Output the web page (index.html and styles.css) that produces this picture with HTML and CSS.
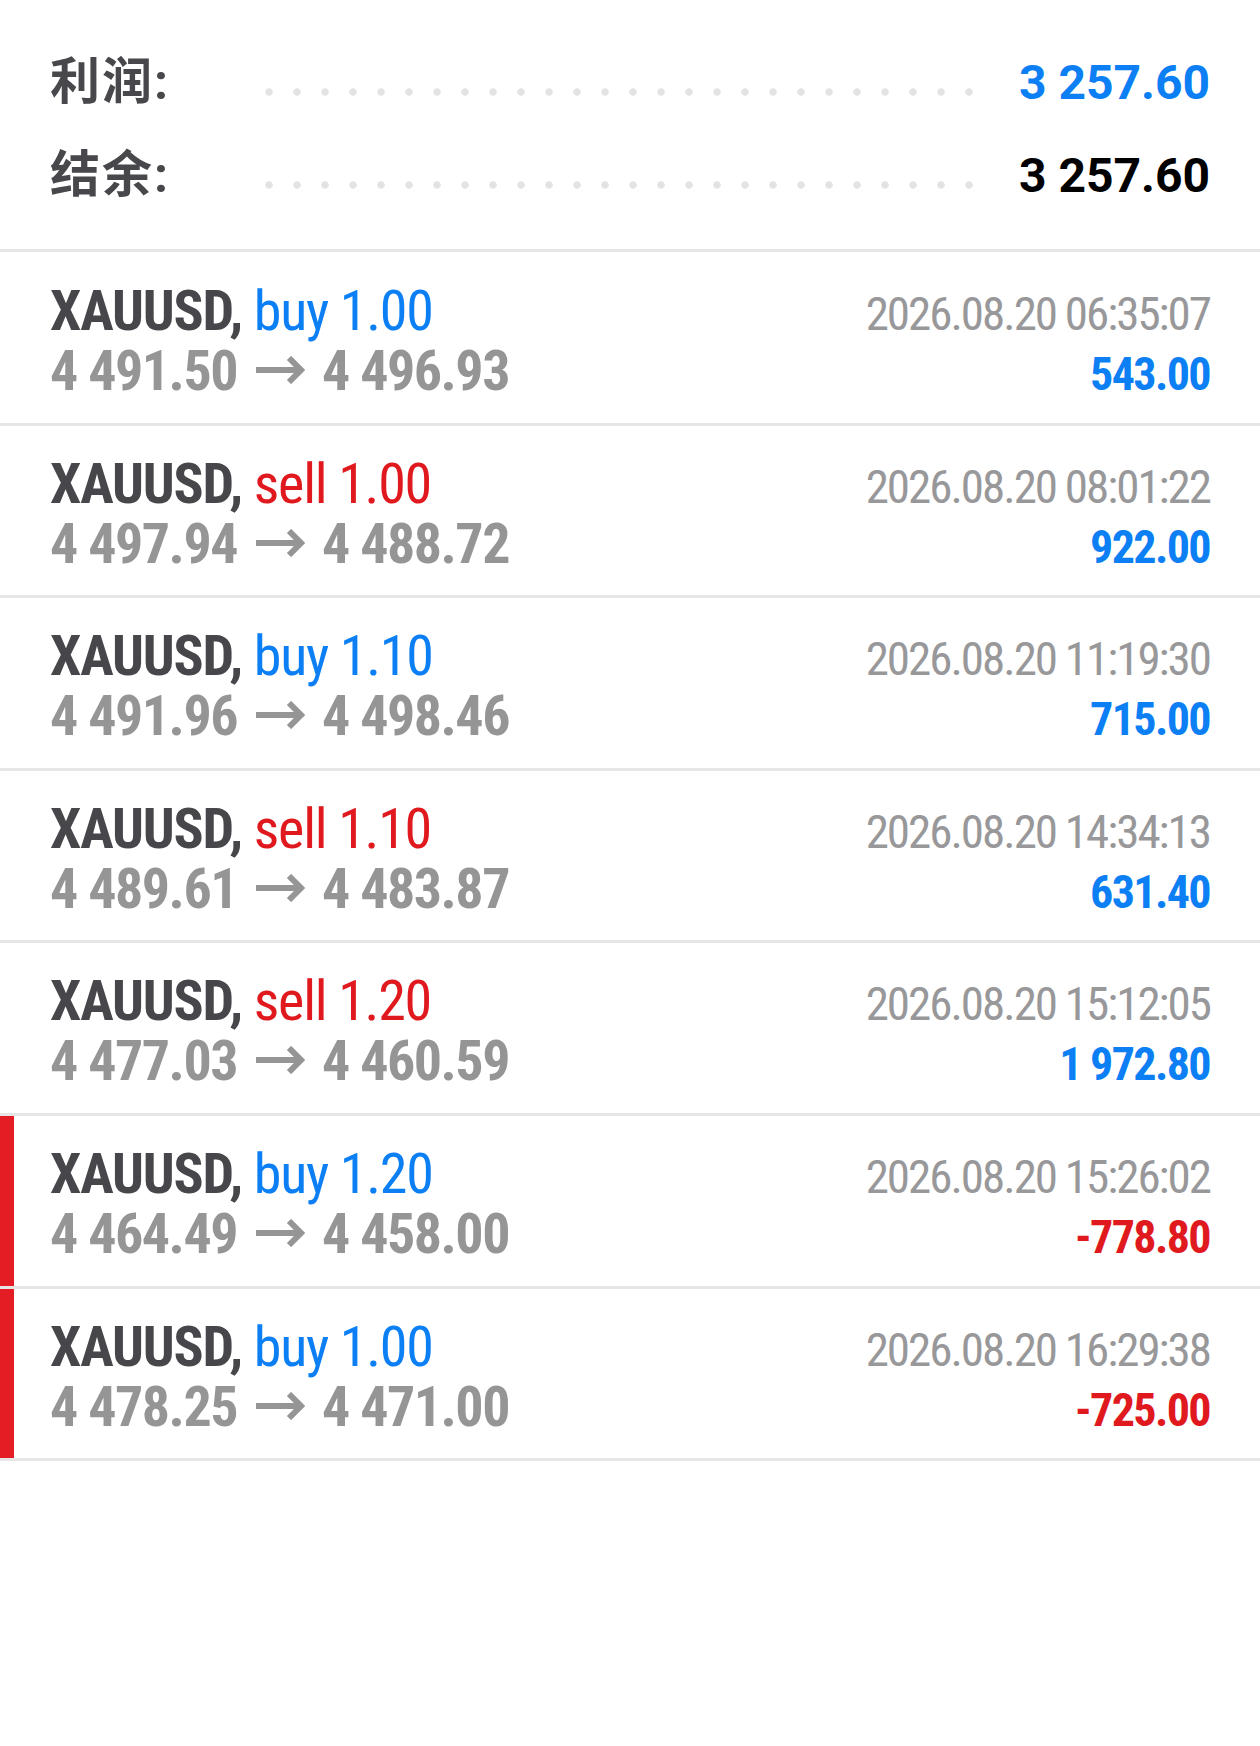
FILE: index.html
```
<!DOCTYPE html>
<html lang="zh">
<head>
    <meta charset="UTF-8">
    <meta name="viewport" content="width=device-width, initial-scale=1.0">
    <title>History</title>
    <link rel="stylesheet" href="styles.css">
</head>
<body>

    <div class="summary">
        <div class="summary-row">
            <span class="summary-label">利润:</span>
            <span class="dots"></span>
            <span class="summary-value profit">3 257.60</span>
        </div>
        <div class="summary-row">
            <span class="summary-label">结余:</span>
            <span class="dots"></span>
            <span class="summary-value">3 257.60</span>
        </div>
    </div>

    <div class="trades">
        <div class="trade">
            <div class="line">
                <span class="symbol">XAUUSD, <span class="side buy">buy 1.00</span></span>
                <span class="time">2026.08.20 06:35:07</span>
            </div>
            <div class="line">
                <span class="prices">4 491.50<svg class="arrow" viewBox="0 0 50 28"><path d="M1 14H46M34 2L46 14L34 26"/></svg>4 496.93</span>
                <span class="amount gain">543.00</span>
            </div>
        </div>

        <div class="trade">
            <div class="line">
                <span class="symbol">XAUUSD, <span class="side sell">sell 1.00</span></span>
                <span class="time">2026.08.20 08:01:22</span>
            </div>
            <div class="line">
                <span class="prices">4 497.94<svg class="arrow" viewBox="0 0 50 28"><path d="M1 14H46M34 2L46 14L34 26"/></svg>4 488.72</span>
                <span class="amount gain">922.00</span>
            </div>
        </div>

        <div class="trade">
            <div class="line">
                <span class="symbol">XAUUSD, <span class="side buy">buy 1.10</span></span>
                <span class="time">2026.08.20 11:19:30</span>
            </div>
            <div class="line">
                <span class="prices">4 491.96<svg class="arrow" viewBox="0 0 50 28"><path d="M1 14H46M34 2L46 14L34 26"/></svg>4 498.46</span>
                <span class="amount gain">715.00</span>
            </div>
        </div>

        <div class="trade">
            <div class="line">
                <span class="symbol">XAUUSD, <span class="side sell">sell 1.10</span></span>
                <span class="time">2026.08.20 14:34:13</span>
            </div>
            <div class="line">
                <span class="prices">4 489.61<svg class="arrow" viewBox="0 0 50 28"><path d="M1 14H46M34 2L46 14L34 26"/></svg>4 483.87</span>
                <span class="amount gain">631.40</span>
            </div>
        </div>

        <div class="trade">
            <div class="line">
                <span class="symbol">XAUUSD, <span class="side sell">sell 1.20</span></span>
                <span class="time">2026.08.20 15:12:05</span>
            </div>
            <div class="line">
                <span class="prices">4 477.03<svg class="arrow" viewBox="0 0 50 28"><path d="M1 14H46M34 2L46 14L34 26"/></svg>4 460.59</span>
                <span class="amount gain">1 972.80</span>
            </div>
        </div>

        <div class="trade loss">
            <div class="line">
                <span class="symbol">XAUUSD, <span class="side buy">buy 1.20</span></span>
                <span class="time">2026.08.20 15:26:02</span>
            </div>
            <div class="line">
                <span class="prices">4 464.49<svg class="arrow" viewBox="0 0 50 28"><path d="M1 14H46M34 2L46 14L34 26"/></svg>4 458.00</span>
                <span class="amount">-778.80</span>
            </div>
        </div>

        <div class="trade loss">
            <div class="line">
                <span class="symbol">XAUUSD, <span class="side buy">buy 1.00</span></span>
                <span class="time">2026.08.20 16:29:38</span>
            </div>
            <div class="line">
                <span class="prices">4 478.25<svg class="arrow" viewBox="0 0 50 28"><path d="M1 14H46M34 2L46 14L34 26"/></svg>4 471.00</span>
                <span class="amount">-725.00</span>
            </div>
        </div>
    </div>

</body>
</html>
```

FILE: styles.css
```
body {
    margin: 0;
    background-color: #ffffff;
    font-family: 'Roboto Condensed', Roboto, sans-serif;
    font-stretch: condensed;
    color: #47474b;
}

/* summary block */

.summary {
    padding: 36px 50px 27px;
    border-bottom: 3px solid #e6e6e6;
}

.summary-row {
    display: flex;
    align-items: baseline;
    height: 93px;
    line-height: 93px;
}

.summary-label {
    width: 205px;
    font-family: Roboto, 'Noto Sans CJK SC', sans-serif;
    font-stretch: normal;
    font-size: 50px;
    font-weight: bold;
    letter-spacing: 2px;
    color: #48484c;
}

.dots {
    flex: 1;
    align-self: stretch;
    margin-right: 35px;
    background-image: radial-gradient(circle closest-side, #e3e3e3 85%, transparent 100%);
    background-size: 28px 8px;
    background-position: 0 52px;
    background-repeat: repeat-x;
}

.summary-value {
    font-family: Roboto, sans-serif;
    font-stretch: normal;
    font-size: 48px;
    font-weight: bold;
    color: #000000;
}

.summary-value.profit {
    color: #0b7ff3;
}

/* trade list */

.trade {
    padding: 29px 50px 21.6px;
    border-bottom: 3px solid #e6e6e6;
}

.trade + .trade {
    padding-top: 28px;
}

.trade.loss {
    box-shadow: inset 14px 0 0 #e31d23;
}

.line {
    display: flex;
    justify-content: space-between;
    align-items: baseline;
    height: 60px;
    line-height: 60px;
}

.symbol {
    font-size: 56px;
    font-weight: bold;
    letter-spacing: -1.2px;
    color: #47474b;
}

.side {
    font-weight: normal;
}

.buy {
    color: #0b7ff3;
}

.sell {
    color: #e0191f;
}

.prices {
    font-size: 56px;
    font-weight: bold;
    letter-spacing: -1.5px;
    color: #959596;
}

.arrow {
    width: 50px;
    height: 28px;
    margin: 0 17px 0 18px;
    vertical-align: 6px;
    fill: none;
    stroke: #959596;
    stroke-width: 6;
}

.time {
    font-size: 47px;
    letter-spacing: -2px;
    color: #98989a;
}

.amount {
    font-size: 46px;
    font-weight: bold;
    letter-spacing: -1.6px;
    color: #e0191f;
}

.amount.gain {
    color: #0b7ff3;
}
```
